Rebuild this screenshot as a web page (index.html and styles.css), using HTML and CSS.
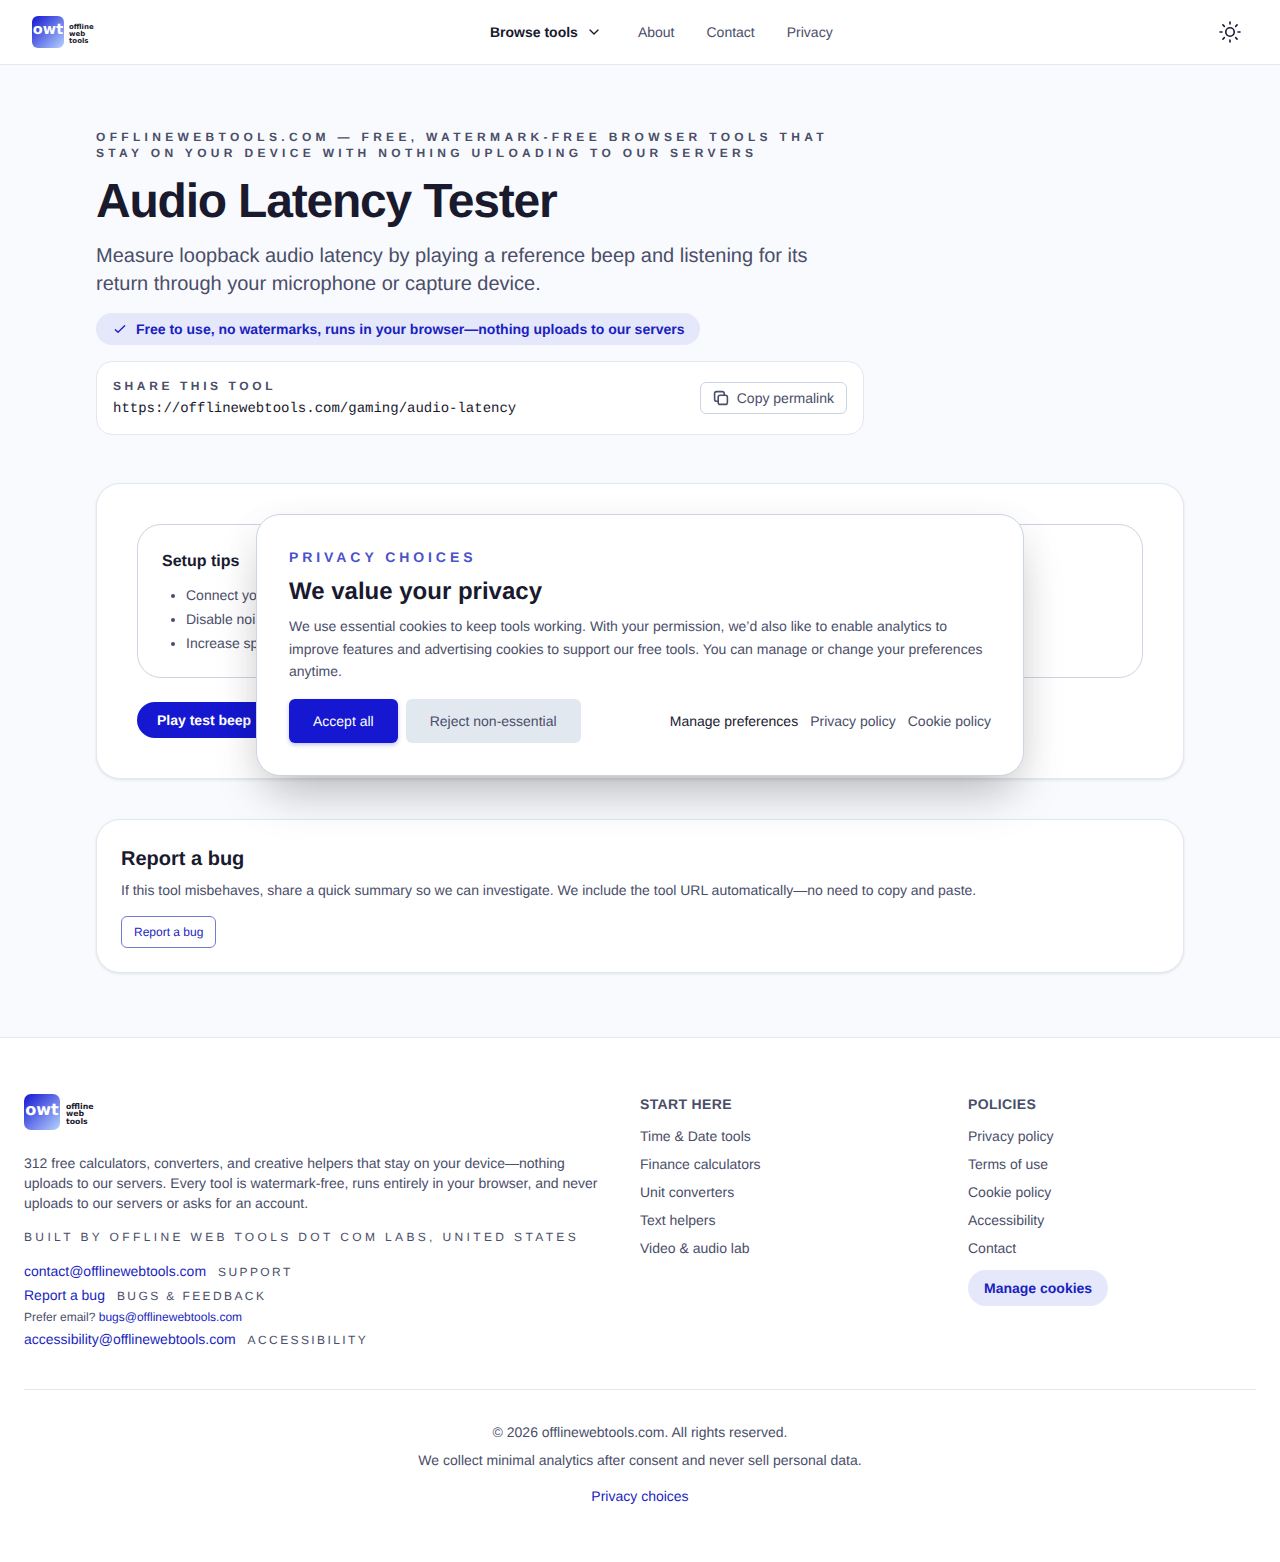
FILE: index.html
```html
<!DOCTYPE html>
<html lang="en">
<head>
    <meta charset="UTF-8">
    <meta name="viewport" content="width=device-width, initial-scale=1.0">
    <title>Audio Latency Tester</title>
    <link rel="stylesheet" href="styles.css">
</head>
<body>
    <header class="site-header">
        <a class="logo" href="#">
            <span class="logo__mark">owt</span>
            <span class="logo__words">offline<br>web<br>tools</span>
        </a>
        <nav class="site-nav">
            <a class="site-nav__browse" href="#">Browse tools
                <svg width="16" height="16" viewBox="0 0 24 24" fill="none" stroke="currentColor" stroke-width="2" stroke-linecap="round" stroke-linejoin="round"><path d="M6 9l6 6 6-6"/></svg>
            </a>
            <a href="#">About</a>
            <a href="#">Contact</a>
            <a href="#">Privacy</a>
        </nav>
        <button class="theme-toggle" aria-label="Toggle theme">
            <svg width="24" height="24" viewBox="0 0 24 24" fill="none" stroke="currentColor" stroke-width="1.6" stroke-linecap="round"><circle cx="12" cy="12" r="4.2"/><path d="M12 2v2M12 20v2M2 12h2M20 12h2M4.93 4.93l1.41 1.41M17.66 17.66l1.41 1.41M4.93 19.07l1.41-1.41M17.66 6.34l1.41-1.41"/></svg>
        </button>
    </header>

    <main class="page">
        <section class="hero">
            <p class="eyebrow">offlinewebtools.com — free, watermark-free browser tools that stay on your device with nothing uploading to our servers</p>
            <h1>Audio Latency Tester</h1>
            <p class="hero__lead">Measure loopback audio latency by playing a reference beep and listening for its return through your microphone or capture device.</p>
            <div class="badge">
                <svg width="16" height="16" viewBox="0 0 24 24" fill="none" stroke="currentColor" stroke-width="2" stroke-linecap="round" stroke-linejoin="round"><path d="M5 13l4 4L19 7"/></svg>
                Free to use, no watermarks, runs in your browser—nothing uploads to our servers
            </div>
            <div class="share">
                <div>
                    <p class="share__label">Share this tool</p>
                    <p class="share__url">https://offlinewebtools.com/gaming/audio-latency</p>
                </div>
                <button class="share__copy">
                    <svg width="16" height="16" viewBox="2 2 20 20" fill="none" stroke="currentColor" stroke-width="2" stroke-linecap="round" stroke-linejoin="round"><rect x="8.5" y="8.5" width="11.5" height="11.5" rx="2.5"/><path d="M16 8.5v-2A2.5 2.5 0 0 0 13.500 4h-7A2.500 2.500 0 0 0 4 6.500v7A2.500 2.500 0 0 0 6.500 16h2"/></svg>
                    Copy permalink
                </button>
            </div>
        </section>

        <section class="card tool">
            <div class="tips">
                <h2>Setup tips</h2>
                <ul>
                    <li>Connect yo</li>
                    <li>Disable noi</li>
                    <li>Increase sp</li>
                </ul>
            </div>
            <button class="tool__play">Play test beep</button>
        </section>

        <section class="card report">
            <h2>Report a bug</h2>
            <p>If this tool misbehaves, share a quick summary so we can investigate. We include the tool URL automatically—no need to copy and paste.</p>
            <a class="report__btn" href="#">Report a bug</a>
        </section>
    </main>

    <footer class="site-footer">
        <div class="site-footer__grid">
            <div>
                <a class="logo logo--large" href="#">
                    <span class="logo__mark">owt</span>
                    <span class="logo__words">offline<br>web<br>tools</span>
                </a>
                <p class="site-footer__about">312 free calculators, converters, and creative helpers that stay on your device—nothing uploads to our servers. Every tool is watermark-free, runs entirely in your browser, and never uploads to our servers or asks for an account.</p>
                <p class="caps site-footer__built">Built by Offline Web Tools dot com Labs, United States</p>
                <p class="contact-row"><a href="#">contact@offlinewebtools.com</a><span class="caps">Support</span></p>
                <p class="contact-row"><a href="#">Report a bug</a><span class="caps">Bugs &amp; feedback</span></p>
                <p class="contact-note">Prefer email? <a href="#">bugs@offlinewebtools.com</a></p>
                <p class="contact-row"><a href="#">accessibility@offlinewebtools.com</a><span class="caps">Accessibility</span></p>
            </div>
            <div>
                <h3>Start here</h3>
                <ul class="footer-links">
                    <li><a href="#">Time &amp; Date tools</a></li>
                    <li><a href="#">Finance calculators</a></li>
                    <li><a href="#">Unit converters</a></li>
                    <li><a href="#">Text helpers</a></li>
                    <li><a href="#">Video &amp; audio lab</a></li>
                </ul>
            </div>
            <div>
                <h3>Policies</h3>
                <ul class="footer-links">
                    <li><a href="#">Privacy policy</a></li>
                    <li><a href="#">Terms of use</a></li>
                    <li><a href="#">Cookie policy</a></li>
                    <li><a href="#">Accessibility</a></li>
                    <li><a href="#">Contact</a></li>
                </ul>
                <button class="manage-cookies">Manage cookies</button>
            </div>
        </div>
        <div class="site-footer__bottom">
            <p>© 2026 offlinewebtools.com. All rights reserved.</p>
            <p>We collect minimal analytics after consent and never sell personal data.</p>
            <a href="#">Privacy choices</a>
        </div>
    </footer>

    <div class="consent" role="dialog">
        <p class="consent__eyebrow">Privacy choices</p>
        <h2>We value your privacy</h2>
        <p class="consent__text">We use essential cookies to keep tools working. With your permission, we’d also like to enable analytics to improve features and advertising cookies to support our free tools. You can manage or change your preferences anytime.</p>
        <div class="consent__actions">
            <button class="consent__accept">Accept all</button>
            <button class="consent__reject">Reject non-essential</button>
            <div class="consent__links">
                <a class="consent__manage" href="#">Manage preferences</a>
                <a href="#">Privacy policy</a>
                <a href="#">Cookie policy</a>
            </div>
        </div>
    </div>
</body>
</html>
```

FILE: styles.css
```css
* {
    box-sizing: border-box;
    margin: 0;
    padding: 0;
}

body {
    position: relative;
    min-height: 1562px;
    background-color: #f9fafd;
    color: #1a1a2e;
    font-family: 'Liberation Sans', Arial, sans-serif;
    font-size: 14px;
    text-rendering: geometricPrecision;
}

a {
    color: inherit;
    text-decoration: none;
}

button {
    font-family: inherit;
    text-rendering: inherit;
    cursor: pointer;
}

ul {
    list-style: none;
}

/* header */
.site-header {
    display: grid;
    grid-template-columns: 458px auto 1fr;
    align-items: center;
    height: 65px;
    padding: 0 32px;
    background-color: #fff;
    border-bottom: 1px solid #e2e8f0;
}

.logo {
    display: flex;
    align-items: center;
    gap: 5px;
    width: 100px;
}

.logo__mark {
    display: flex;
    align-items: center;
    justify-content: center;
    width: 32px;
    height: 32px;
    padding-bottom: 5px;
    border-radius: 6px;
    background: linear-gradient(135deg, #1515d0, #b5d3ff);
    color: #fff;
    font-family: 'DejaVu Sans', sans-serif;
    font-size: 14.5px;
    font-weight: 700;
}

.logo__words {
    padding-top: 4px;
    color: #1a1a2e;
    font-family: 'DejaVu Sans', sans-serif;
    font-size: 7px;
    font-weight: 700;
    line-height: 7px;
}

.logo--large {
    gap: 6px;
}

.logo--large .logo__mark {
    width: 36px;
    height: 36px;
    padding-bottom: 6px;
    border-radius: 7px;
    font-size: 16px;
}

.logo--large .logo__words {
    font-size: 7.8px;
    line-height: 7.5px;
}

.site-nav {
    display: flex;
    align-items: center;
    gap: 32px;
    color: #4a4e69;
}

.site-nav__browse {
    display: flex;
    align-items: center;
    gap: 8px;
    padding-right: 4px;
    color: #1a1a2e;
    font-weight: 700;
}

.theme-toggle {
    display: flex;
    justify-self: end;
    margin-right: 4px;
    padding: 2px;
    border: none;
    background: none;
    color: #1a1a2e;
}

/* main */
.page {
    max-width: 1088px;
    margin: 0 auto;
    padding: 64px 0;
}

.hero {
    width: 768px;
    margin-bottom: 48px;
}

.eyebrow {
    color: #4a4e69;
    font-size: 12px;
    font-weight: 700;
    line-height: 16px;
    letter-spacing: 0.36em;
    text-transform: uppercase;
}

h1 {
    margin-top: 11px;
    font-size: 48px;
    line-height: 60px;
    letter-spacing: -0.025em;
}

.hero__lead {
    margin-top: 10px;
    color: #4a4e69;
    font-size: 20px;
    line-height: 28px;
}

.badge {
    display: inline-flex;
    align-items: center;
    gap: 8px;
    margin-top: 15px;
    padding: 8px 16px;
    border-radius: 999px;
    background-color: #e5e7fa;
    color: #1a1fc0;
    font-weight: 700;
    line-height: 16px;
}

.share {
    display: flex;
    align-items: center;
    justify-content: space-between;
    margin-top: 16px;
    padding: 16px;
    border: 1px solid #e2e8f0;
    border-radius: 16px;
    background-color: #fff;
}

.share__label {
    color: #4a4e69;
    font-size: 12px;
    font-weight: 700;
    line-height: 16px;
    letter-spacing: 0.3em;
    text-transform: uppercase;
}

.share__url {
    margin-top: 5px;
    margin-bottom: -1px;
    color: #1a1a2e;
    font-family: 'Liberation Mono', monospace;
    font-size: 14px;
    line-height: 20px;
    font-variant-ligatures: none;
}

.share__copy {
    display: flex;
    align-items: center;
    gap: 8px;
    height: 32px;
    padding: 0 12px;
    border: 1px solid #cbd5e1;
    border-radius: 6px;
    background-color: #fff;
    color: #4a4e69;
    font-size: 14px;
}

.card {
    border: 1px solid #e2e8f0;
    border-radius: 24px;
    background-color: #fff;
    box-shadow: 0 1px 3px rgba(15, 23, 42, 0.1);
}

.tool {
    padding: 40px;
    margin-bottom: 40px;
}

.tips {
    height: 154px;
    padding: 25px 24px 24px;
    border: 1px solid #cbd5e1;
    border-radius: 24px;
}

.tips h2 {
    font-size: 16px;
    line-height: 24px;
}

.tips ul {
    margin-top: 9px;
    padding-left: 24px;
    color: #4a4e69;
    list-style: disc;
}

.tips li {
    line-height: 24px;
}

.tool__play {
    height: 36px;
    margin-top: 24px;
    padding: 0 20px;
    width: 140px;
    text-align: left;
    border: none;
    border-radius: 999px;
    background-color: #1518d0;
    color: #fff;
    font-size: 14px;
    font-weight: 700;
}

.report {
    padding: 25px 24px 24px;
    height: 154px;
}

.report h2 {
    font-size: 20px;
    line-height: 28px;
}

.report p {
    margin-top: 7px;
    color: #4a4e69;
    line-height: 20px;
}

.report__btn {
    display: inline-block;
    margin-top: 16px;
    padding: 0 12px;
    border: 1px solid #737bd2;
    border-radius: 6px;
    color: #1a1fc0;
    font-size: 12px;
    line-height: 30px;
}

/* footer */
.site-footer {
    padding: 56px 24px 0;
    background-color: #fff;
    border-top: 1px solid #e2e8f0;
    height: 525px;
}

.site-footer__grid {
    display: grid;
    grid-template-columns: 2fr 1fr 1fr;
    gap: 40px;
    padding-bottom: 40px;
    border-bottom: 1px solid #e2e8f0;
    color: #4a4e69;
}

.site-footer__about {
    margin-top: 23px;
    line-height: 20px;
}

.caps {
    font-size: 12px;
    letter-spacing: 0.2em;
    text-transform: uppercase;
}

.site-footer__built {
    margin-top: 16px;
    line-height: 16px;
    letter-spacing: 0.28em;
}

.contact-row {
    display: flex;
    align-items: baseline;
    gap: 12px;
    height: 20px;
    line-height: 20px;
    margin-top: 4px;
}

.site-footer__built + .contact-row {
    margin-top: 16px;
}

.contact-row a,
.contact-note a {
    color: #1a1fc0;
}

.contact-note {
    font-size: 12px;
    line-height: 16px;
    margin-top: 4px;
}

.site-footer h3 {
    font-size: 14px;
    line-height: 20px;
    letter-spacing: 0.025em;
    text-transform: uppercase;
}

.footer-links {
    margin-top: 12px;
}

.footer-links li {
    margin-bottom: 8px;
    line-height: 20px;
}

.manage-cookies {
    height: 36px;
    margin-top: 4px;
    padding: 0 16px;
    border: none;
    border-radius: 999px;
    background-color: #e5e7fa;
    color: #1a1fc0;
    font-size: 14px;
    font-weight: 700;
}

.site-footer__bottom {
    padding-top: 32px;
    color: #4a4e69;
    text-align: center;
    line-height: 20px;
}

.site-footer__bottom p {
    margin-bottom: 8px;
}

.site-footer__bottom a {
    display: inline-block;
    margin-top: 8px;
    color: #1a1fc0;
}

/* consent dialog sits over the page */
.consent {
    position: absolute;
    top: 514px;
    left: 256px;
    width: 768px;
    height: 262px;
    padding: 32px;
    border: 1px solid #cbd5e1;
    border-radius: 24px;
    background-color: #fff;
    box-shadow: 0 25px 50px -12px rgba(0, 0, 0, 0.25), 0 10px 40px rgba(0, 0, 0, 0.05);
}

.consent__eyebrow {
    color: #4a52cc;
    font-size: 14px;
    font-weight: 700;
    line-height: 20px;
    letter-spacing: 0.28em;
    text-transform: uppercase;
}

.consent h2 {
    margin-top: 9px;
    font-size: 24px;
    line-height: 32px;
}

.consent__text {
    margin-top: 7px;
    color: #4a4e69;
    line-height: 22.5px;
}

.consent__actions {
    display: flex;
    align-items: center;
    gap: 8px;
    margin-top: 16.5px;
}

.consent__actions button {
    height: 44px;
    padding: 0 24px;
    border: none;
    border-radius: 6px;
    font-size: 14px;
}

.consent__accept {
    background-color: #1518d0;
    color: #fff;
    box-shadow: 0 2px 4px rgba(21, 21, 208, 0.25);
}

.consent__reject {
    background-color: #e2e8f0;
    color: #4a4e69;
}

.consent__links {
    display: flex;
    gap: 12px;
    margin-left: auto;
    color: #4a4e69;
}

.consent__manage {
    color: #1a1a2e;
}
```
